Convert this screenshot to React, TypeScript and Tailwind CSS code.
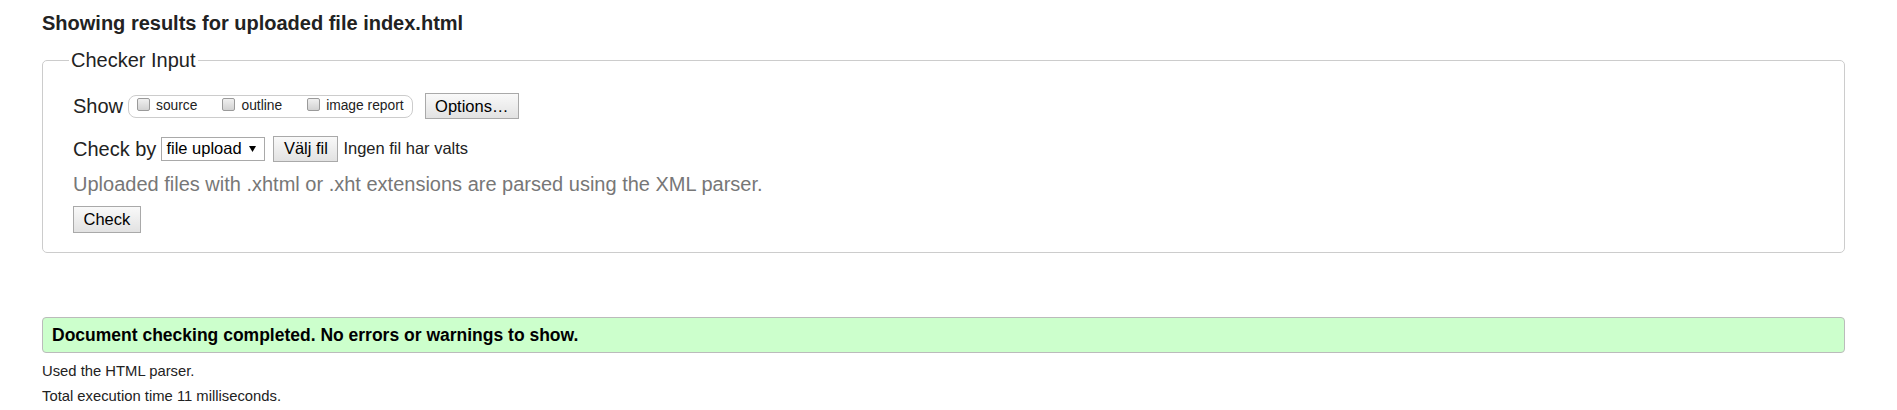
import { memo } from 'react'

const Checkbox = () => (
  <span className="mb-[4px] mr-[6px] inline-block h-[13px] w-[13px] rounded-[2px] border border-[#9a9a9a] bg-gradient-to-b from-[#f0f0f0] to-[#d2d2d2]"></span>
)

const Button = ({ label, tall }: { label: string; tall?: boolean }) => (
  <button
    type="button"
    className={
      tall
        ? 'h-[27px] border border-[#a9a9a9] bg-gradient-to-b from-[#f9f9f9] to-[#e2e2e2] px-[9.5px] text-[16.5px] leading-none text-black'
        : 'h-[26px] border border-[#a9a9a9] bg-gradient-to-b from-[#f9f9f9] to-[#e2e2e2] px-[9.5px] text-[16.5px] leading-none text-black'
    }
  >
    {label}
  </button>
)

const App = memo(function App() {
  return (
    <div className="min-h-[410px] bg-white pl-[42px] pr-[52px] pt-[12px] font-['Liberation_Sans',Arial,sans-serif] text-[#222]">
      <h2 className="text-[20px] font-bold leading-[23px]">Showing results for uploaded file index.html</h2>

      <fieldset className="mt-[14px] rounded-[5px] border border-[#cccccc] pb-[19px] pl-[30px]">
        <legend className="-ml-[4px] px-[2px] text-[20px] leading-[22px]">Checker Input</legend>

        <div className="mt-[22px] flex h-[26px] items-center">
          <span className="text-[20px]">Show</span>
          <div className="ml-[5px] flex h-[23px] items-center rounded-[8px] border border-[#cccccc] pl-[8px] pr-[8px] text-[13.8px]">
            <label className="flex items-center">
              <Checkbox />
              source
            </label>
            <label className="ml-[25px] flex items-center">
              <Checkbox />
              outline
            </label>
            <label className="ml-[25px] flex items-center">
              <Checkbox />
              image report
            </label>
          </div>
          <div className="ml-[12px]">
            <Button label="Options…" />
          </div>
        </div>

        <div className="mt-[16px] flex h-[27px] items-center">
          <span className="text-[20px]">Check by</span>
          <div className="ml-[5px] flex h-[24px] w-[104px] items-center justify-between border border-[#a9a9a9] bg-white pl-[4px] pr-[8px] text-[16.5px] text-black">
            <span>file upload</span>
            <svg width="7" height="6" viewBox="0 0 7 6">
              <polygon points="0,0 7,0 3.5,6" fill="#000" />
            </svg>
          </div>
          <div className="ml-[8px]">
            <Button label="Välj fil" />
          </div>
          <span className="ml-[5px] text-[16.5px]">Ingen fil har valts</span>
        </div>

        <p className="mt-[11px] text-[20px] leading-[22px] text-[#777777]">
          Uploaded files with .xhtml or .xht extensions are parsed using the XML parser.
        </p>

        <div className="mt-[11px]">
          <Button label="Check" tall />
        </div>
      </fieldset>

      <div className="mt-[64px] flex h-[36px] items-center rounded-[4px] border border-[#bbbbbb] bg-[#ccffcc] px-[9px] text-[17.5px] font-bold text-black">
        Document checking completed. No errors or warnings to show.
      </div>

      <p className="mt-[6px] text-[14.8px] leading-[25px]">Used the HTML parser.</p>
      <p className="text-[14.8px] leading-[25px]">Total execution time 11 milliseconds.</p>
    </div>
  )
})

export default App
